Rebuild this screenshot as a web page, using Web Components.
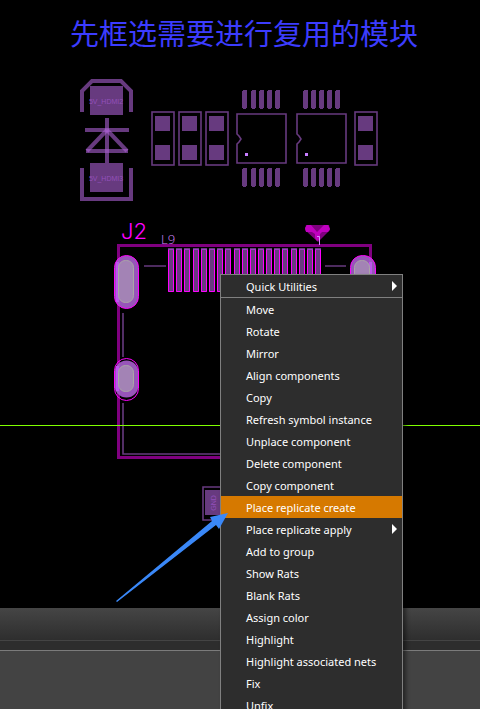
<!DOCTYPE html>
<html lang="zh-CN">
<head>
<meta charset="utf-8">
<meta name="viewport" content="width=device-width, initial-scale=1">
<title>先框选需要进行复用的模块</title>
<style>
  html, body { margin: 0; background: #000; }
</style>
</head>
<body>
<pcb-workspace>
  <page-title slot="title">先框选需要进行复用的模块</page-title>
  <pcb-board slot="board"></pcb-board>
  <status-dock slot="dock"></status-dock>
  <context-menu slot="menu">
    <menu-item submenu divided>Quick Utilities</menu-item>
    <menu-item>Move</menu-item>
    <menu-item>Rotate</menu-item>
    <menu-item>Mirror</menu-item>
    <menu-item>Align components</menu-item>
    <menu-item>Copy</menu-item>
    <menu-item>Refresh symbol instance</menu-item>
    <menu-item>Unplace component</menu-item>
    <menu-item>Delete component</menu-item>
    <menu-item>Copy component</menu-item>
    <menu-item active>Place replicate create</menu-item>
    <menu-item submenu>Place replicate apply</menu-item>
    <menu-item>Add to group</menu-item>
    <menu-item>Show Rats</menu-item>
    <menu-item>Blank Rats</menu-item>
    <menu-item>Assign color</menu-item>
    <menu-item>Highlight</menu-item>
    <menu-item>Highlight associated nets</menu-item>
    <menu-item>Fix</menu-item>
    <menu-item>Unfix</menu-item>
  </context-menu>
  <pointer-arrow slot="pointer"></pointer-arrow>
</pcb-workspace>

<script>
const define = (name, html) => customElements.define(name, class extends HTMLElement {
  constructor() {
    super();
    this.attachShadow({ mode: 'open' }).innerHTML = html;
  }
});

define('page-title', `
<style>
  :host { display: block; }
  h1 { margin: 0; padding: 11px 8px 0; text-align: center; color: #3c3cff;
       font: 400 29px/42px "Noto Sans CJK SC", sans-serif; }
</style>
<h1><slot></slot></h1>`);

define('pcb-workspace', `
<style>
  :host { display: flex; flex-direction: column; position: relative; height: 100vh; overflow: hidden; background: #000; }
  .view { flex: 6 1 0; position: relative; min-height: 0; }
  .dock { flex: 1 1 0; display: flex; min-height: 0; }
  .dock ::slotted(*) { flex: 1; }
  .board, .pointer { position: absolute; inset: 0; pointer-events: none; }
  .menu { position: absolute; left: 220px; top: 274px; }
  .title { position: relative; padding-left: 8px; }
</style>
<div class="view">
  <div class="board"><slot name="board"></slot></div>
  <div class="title"><slot name="title"></slot></div>
</div>
<div class="dock"><slot name="dock"></slot></div>
<div class="menu"><slot name="menu"></slot></div>
<div class="pointer"><slot name="pointer"></slot></div>`);

const capacitor = x => `
  <rect class="line" x="${x + 2}" y="112" width="22" height="53"/>
  <rect class="pad" x="${x + 5}" y="116" width="15" height="15"/>
  <rect class="pad" x="${x + 5}" y="145" width="15" height="15"/>`;

const pin = (x, y) => `<path class="pad" d="M${x + 1} ${y}h4v18h-1v1h-3v-1h-1v-17h1z"/>`;

const chip = (x, pins) => `
  <path class="line" d="M${x + 1} 114H${x + 50}V163H${x + 1}V144L${x + 3} 142L${x + 5} 139L${x + 3} 136L${x + 1} 134Z"/>
  <rect fill="#c77dff" x="${x + 9}" y="153" width="3" height="3"/>
  ${pins.map(p => pin(p, 90) + pin(p, 168)).join('')}`;

const finger = x => `
  <rect fill="#673a7f" x="${x}" y="248" width="6" height="44"/>
  <path fill="none" stroke="#f0f" d="M${x + .5} 249V291.5H${x + 5.5}V249"/>
  <path stroke="#a03cc8" d="M${x} 249.5h6"/>`;

define('pcb-board', `
<style>
  :host { display: block; height: 100%; }
  svg { display: block; width: 100%; height: 100%; }
  .line { fill: none; stroke: #673a7f; stroke-width: 1.6; }
  .pad { fill: #673a7f; shape-rendering: crispEdges; }
  .silk { fill: none; stroke: #a95fd0; stroke-opacity: .61; stroke-width: 4; }
  .net { font: 7px "Liberation Sans", sans-serif; fill: #9350bb; text-anchor: middle; }
  .ref { font: 300 22px Inter, sans-serif; fill: #f0f; }
  .pinno { font: 300 13px "Open Sans", sans-serif; fill: #d78cff; }
</style>
<svg role="img" aria-label="PCB layout">
  <path class="silk" d="M82 112V91L92 81H121L131 91V112"/>
  <rect class="pad" x="90" y="86" width="33" height="29"/>
  <text class="net" x="106" y="104">5V_HDMI2</text>
  <path class="silk" d="M107 118V163"/>
  <path class="silk" d="M85 130H129"/>
  <path class="silk" d="M107 130L87 151"/>
  <path class="silk" d="M107 130L127 151"/>
  <path class="silk" d="M86 151H128"/>
  <rect class="pad" x="90" y="163" width="33" height="29"/>
  <text class="net" x="106" y="181">5V_HDMI3</text>
  <path class="silk" d="M82 168V199H131V168"/>

  ${[150, 177, 204, 353].map(capacitor).join('')}
  ${chip(236, [242, 251, 259, 267, 275])}
  ${chip(296, [303, 311, 319, 327, 335])}

  <text class="ref" x="121" y="239">J2</text>
  <text class="pinno" x="161" y="244">L9</text>
  <rect fill="none" stroke="#800080" stroke-width="3" x="118.5" y="245.5" width="252" height="212"/>
  <path class="line" d="M144 266H166M325 266H346M123 313V357M123 403V454H360"/>
  ${[168, 176, 184, 193, 201, 209, 217, 225, 234, 242, 250, 258, 266, 274, 282, 291, 299, 307, 315].map(finger).join('')}

  <g fill="#a35bc7" fill-opacity=".93" stroke="#f0f">
    <rect x="114.5" y="255.5" width="24" height="53" rx="12"/>
    <rect x="350.5" y="255.5" width="25" height="53" rx="12"/>
    <rect x="114.5" y="360.5" width="24" height="37" rx="12" stroke="none"/>
    <rect x="114.5" y="358.5" width="24" height="42" rx="12" fill="none"/>
  </g>
  <path stroke="#bd55ee" stroke-width="3" d="M117.5 262V302M117.5 366V391M370.5 262V302"/>
  <g fill="#a383b5" stroke="#aaa6a6">
    <rect x="118.5" y="260.5" width="15" height="42" rx="7"/>
    <rect x="354.5" y="260.5" width="15" height="42" rx="7"/>
    <rect x="118.5" y="365.5" width="15" height="26" rx="7"/>
  </g>

  <path fill="#800080" d="M306 225H329L330 230L318 242L305 230Z"/>
  <path fill="#c000c0" d="M307 225H311L317 232L324 225H328L330 229L328 232H322L320 234V239L317 241L315 238V234L312 232H306L305 228Z"/>
  <path stroke="#d78cff" fill="none" d="M317 236.5H319.5V245"/>

  <path class="line" d="M240 487H203V520H240"/>
  <rect class="pad" x="205" y="490" width="25" height="25"/>
  <text class="net" transform="translate(216 503) rotate(-90)">GND</text>
  <rect fill="#80ff00" x="0" y="425" width="100%" height="1"/>
</svg>`);

define('status-dock', `
<style>
  :host { display: flex; flex-direction: column; }
  .bar { flex: none; height: 32px; background: linear-gradient(#454545, #2e2e2e); }
  .gap { flex: none; height: 9px; background: #2d2d2d; border-top: 1px solid #444; border-bottom: 1px solid #7b7b7b; }
  .panel { flex: 1; background: #434343; }
</style>
<div class="bar"></div><div class="gap"></div><div class="panel"></div>`);

define('context-menu', `
<style>
  :host { display: block; }
  div { border: 1px solid #808080; background: #2d2d2d; box-shadow: 3px 3px 4px rgba(0,0,0,.45);
        min-width: 181px; width: max-content; }
</style>
<div role="menu"><slot></slot></div>`);

define('menu-item', `
<style>
  :host { display: block; }
  :host([divided]) { border-bottom: 1px solid #808080; }
  button { display: flex; align-items: center; justify-content: space-between; width: 100%; height: 22px;
           padding: 2px 5px 0 25px; border: 0; background: none; color: #fff; text-align: left;
           font: 11px/20px "Noto Sans", sans-serif; }
  :host([active]) button { background: #d67900; }
  svg { display: none; width: 5px; height: 10px; margin-bottom: 2px; fill: #fff; }
  :host([submenu]) svg { display: block; }
</style>
<button type="button" role="menuitem"><span><slot></slot></span><svg viewBox="0 0 5 10" aria-hidden="true"><path d="M0 0L5 5L0 10Z"/></svg></button>`);

define('pointer-arrow', `
<style>
  :host { display: block; height: 100%; }
  svg { display: block; width: 100%; height: 100%; }
</style>
<svg aria-hidden="true"><path fill="#3a88f8" d="M228 513L219 529L216 525L117 602L116 601L212 521L210 517Z"/></svg>`);
</script>
</body>
</html>
